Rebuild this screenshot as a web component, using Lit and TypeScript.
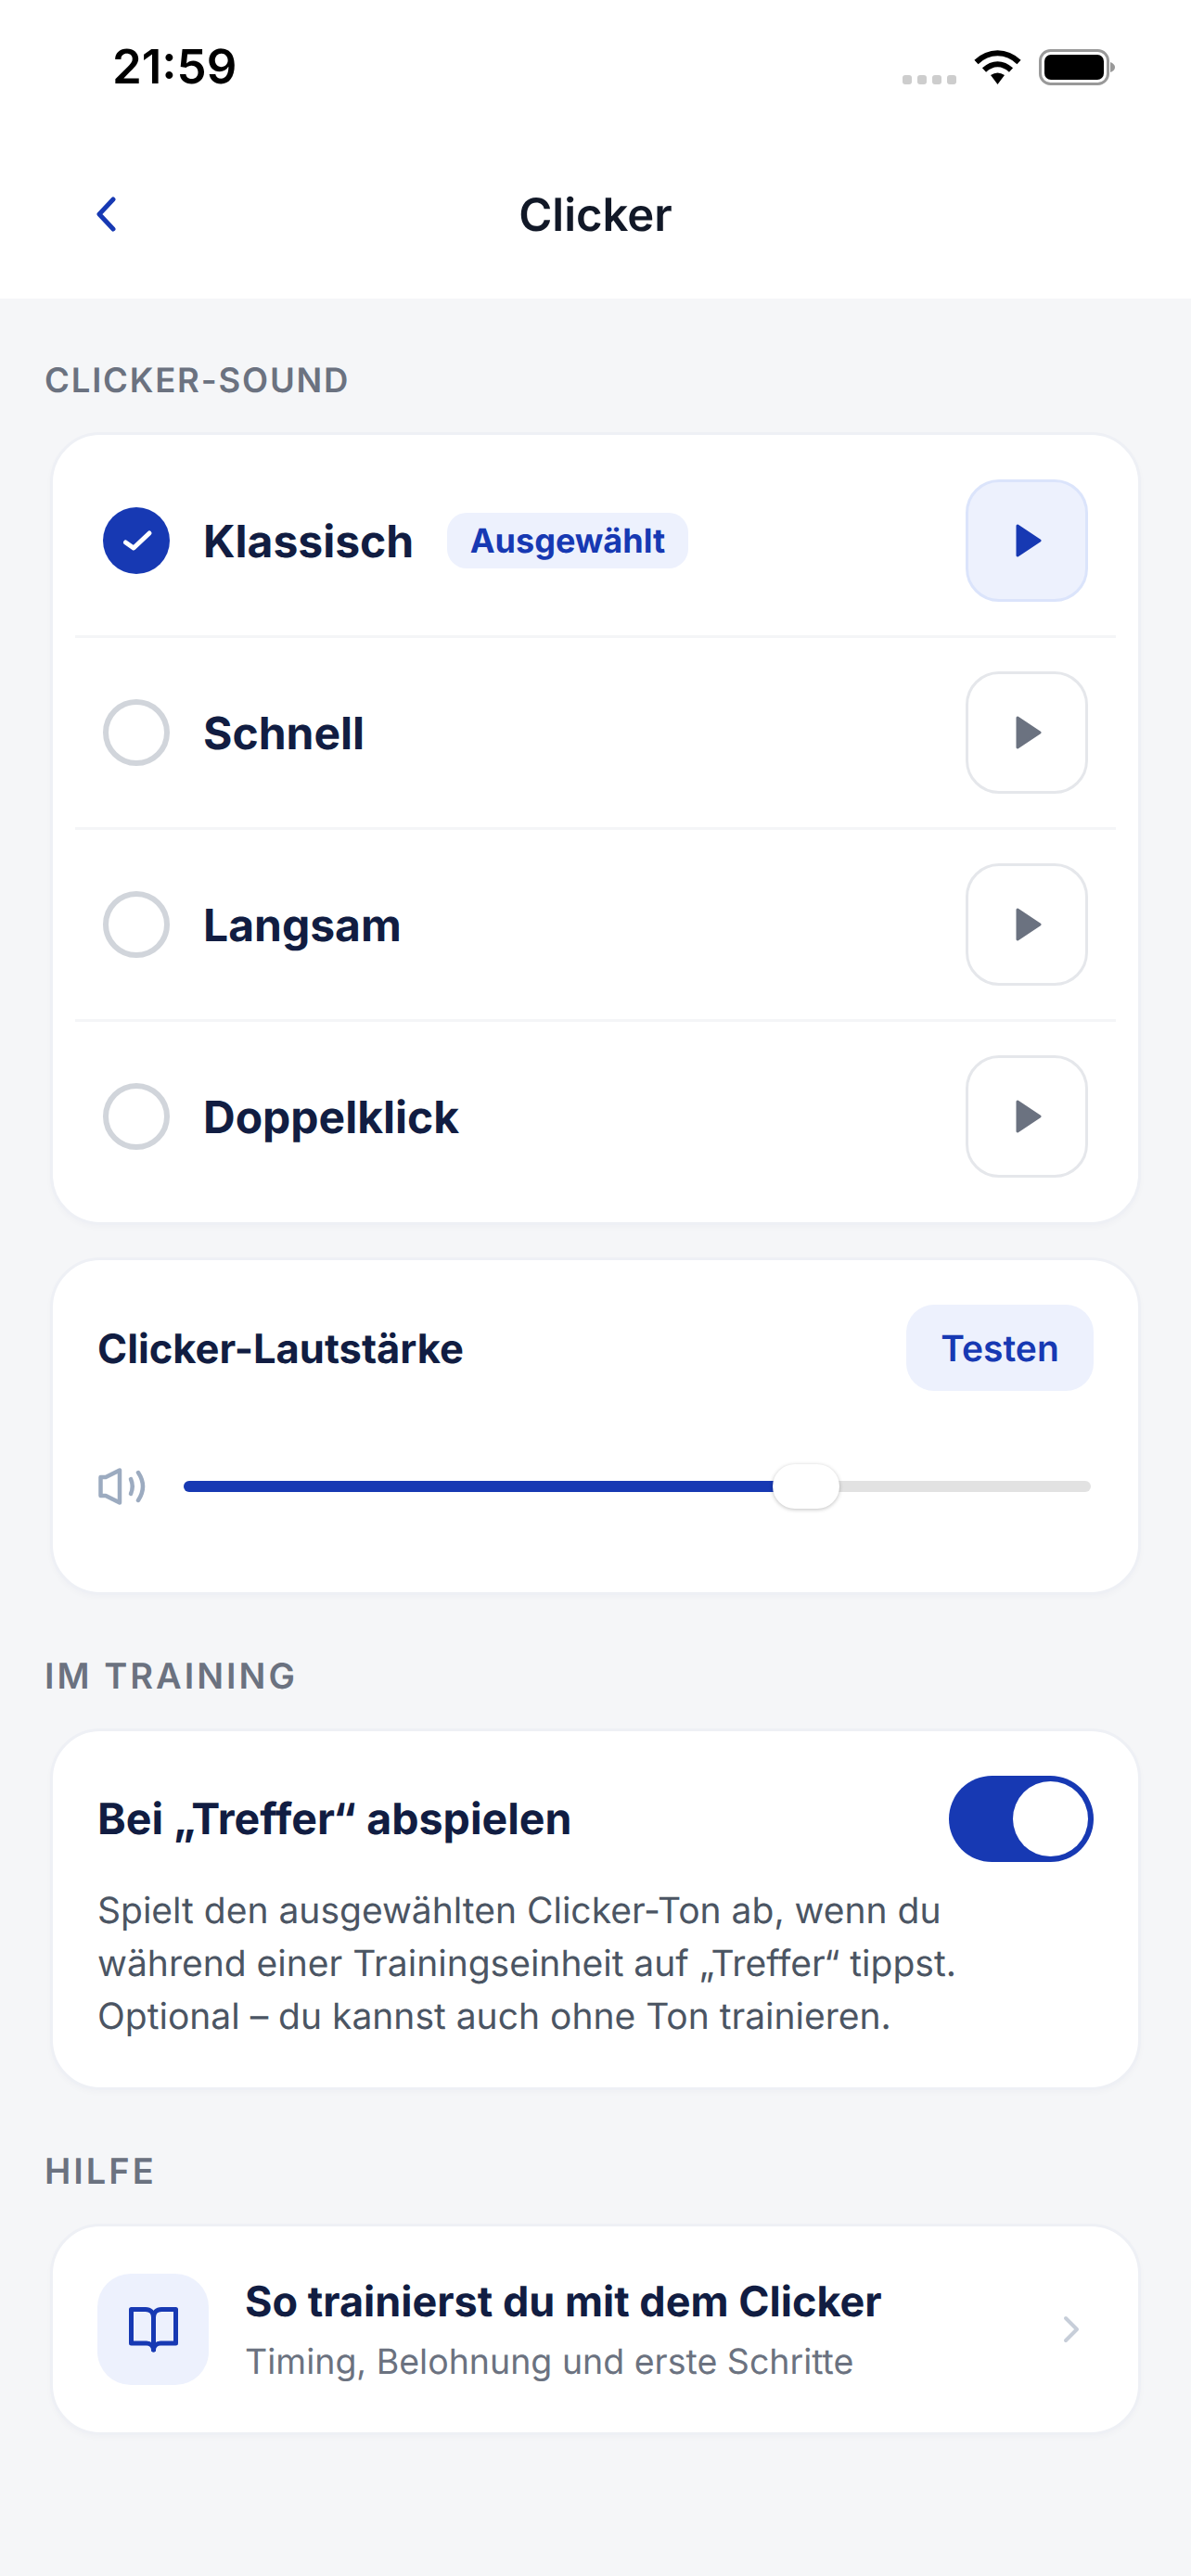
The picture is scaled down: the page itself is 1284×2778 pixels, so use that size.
import { LitElement, html, css } from 'lit';
import { customElement } from 'lit/decorators.js';

const SOUNDS = ['Klassisch', 'Schnell', 'Langsam', 'Doppelklick'];
const VOLUME = 68.6;

@customElement('app-root')
export class AppRoot extends LitElement {
    static styles = css`
        :host {
            display: block;
            width: 1284px;
            min-height: 2778px;
            background: #f5f6f8;
            font-family: Inter, "Liberation Sans", sans-serif;
            color: #111d42;
            text-rendering: geometricPrecision;
        }
        svg { display: block; }

        .top { background: #fff; height: 322px; }
        .status {
            height: 142px;
            box-sizing: border-box;
            padding: 49px 82px 0 121px;
            display: flex;
            justify-content: space-between;
            align-items: flex-start;
        }
        .time {
            font-size: 51px;
            font-weight: 600;
            line-height: 48px;
            color: #000;
        }
        .status-icons { display: flex; align-items: flex-start; padding-top: 4px; }
        .dots { display: flex; gap: 6px; margin: 28px 19px 0 0; }
        .dots i { width: 10px; height: 10px; border-radius: 3px; background: #cdcdcd; }
        .battery { margin-left: 19px; }

        .nav {
            height: 180px;
            box-sizing: border-box;
            padding-bottom: 2px;
            position: relative;
            display: flex;
            align-items: center;
            justify-content: center;
        }
        .back { position: absolute; left: 102px; top: 70px; color: #1739b3; }
        .nav h1 { margin: 0; font-size: 49px; font-weight: 600; color: #111827; }

        main { padding: 64px 54px 0; }
        .label {
            margin: 0 0 32px -6px;
            font-size: 38px;
            line-height: 48px;
            font-weight: 600;
            letter-spacing: 3px;
            color: #6b7280;
        }
        .label.first { font-size: 36.5px; letter-spacing: 1.8px; }
        .card {
            background: #fff;
            border: 3px solid #eef0f5;
            border-radius: 54px;
            box-shadow: 0 3px 6px rgba(17, 29, 66, 0.025);
        }

        .list { padding: 12px 24px; }
        .row {
            display: flex;
            align-items: center;
            padding: 36px 30px;
        }
        .row + .row { border-top: 3px solid #f4f5f7; }
        .radio {
            width: 72px;
            height: 72px;
            box-sizing: border-box;
            border: 6px solid #d1d5db;
            border-radius: 50%;
            margin-right: 36px;
            flex: none;
        }
        .radio.on { background: #1739b3; border: 0; color: #fff; }
        .name { font-size: 48px; font-weight: 700; color: #111d42; }
        .badge {
            margin-left: 36px;
            height: 60px;
            padding: 0 24.5px;
            display: flex;
            align-items: center;
            border-radius: 21px;
            background: #edf1fd;
            color: #1739b3;
            font-size: 36px;
            font-weight: 700;
        }
        .play {
            margin-left: auto;
            width: 132px;
            height: 132px;
            box-sizing: border-box;
            border: 3px solid #e5e7eb;
            border-radius: 36px;
            background: #fff;
            color: #6b7280;
            display: flex;
            align-items: center;
            justify-content: center;
            padding: 0 0 0 4px;
        }
        .play.on { background: #edf1fd; border-color: #dbe4fb; color: #1739b3; }

        .volume { margin-top: 35px; padding: 48px 48px 90px; }
        .volume-head { display: flex; align-items: center; justify-content: space-between; }
        .title { font-weight: 700; color: #111d42; }
        .volume-head .title { font-size: 43.5px; padding-top: 2px; }
        .training-head .title { font-size: 46.5px; }
        .test {
            width: 202px;
            height: 93px;
            box-sizing: border-box;
            padding-top: 2px;
            border-radius: 30px;
            background: #edf1fd;
            color: #1739b3;
            font-size: 39px;
            font-weight: 600;
            display: flex;
            align-items: center;
            justify-content: center;
        }
        .slider-row {
            margin-top: 79px;
            height: 48px;
            padding: 0 3px 0 1px;
            display: flex;
            align-items: center;
            gap: 40px;
        }
        .speaker { color: #9cabc0; flex: none; }
        .track {
            flex: 1;
            height: 12px;
            border-radius: 6px;
            background: #e2e2e2;
            position: relative;
        }
        .fill { height: 100%; border-radius: 6px 0 0 6px; background: #1739b3; }
        .thumb {
            position: absolute;
            top: -18px;
            width: 72px;
            height: 48px;
            margin-left: -36px;
            border-radius: 24px;
            background: #fff;
            box-shadow: 0 1px 4px rgba(0, 0, 0, 0.25);
        }

        .section { margin-top: 64px; }
        .training { padding: 48px 48px 48px; }
        .training-head { display: flex; align-items: center; justify-content: space-between; }
        .toggle {
            width: 156px;
            height: 93px;
            box-sizing: border-box;
            padding: 6px;
            border-radius: 47px;
            background: #1739b3;
            display: flex;
            justify-content: flex-end;
        }
        .toggle i { width: 81px; height: 81px; border-radius: 50%; background: #fff; }
        .desc {
            margin: 24px 0 0;
            font-size: 39px;
            line-height: 57px;
            color: #4b5563;
        }

        .help {
            display: flex;
            align-items: center;
            gap: 39px;
            padding: 51px 63px 51px 48px;
        }
        .help-icon {
            width: 120px;
            height: 120px;
            border-radius: 36px;
            background: #edf1fd;
            color: #1739b3;
            display: flex;
            align-items: center;
            justify-content: center;
            flex: none;
        }
        .help-text { flex: 1; }
        .help-title { font-size: 45px; line-height: 60px; font-weight: 700; color: #111d42; }
        .help-sub { margin-top: 9px; margin-bottom: -3px; font-size: 37.5px; line-height: 54px; color: #6b7280; }
        .chev { color: #c7ced9; }
    `;

    renderPlay() {
        return html`<svg width="28" height="36" viewBox="0 0 28 36">
            <path d="M2 2 L26 18 L2 34 Z" fill="currentColor" stroke="currentColor" stroke-width="3" stroke-linejoin="round"/>
        </svg>`;
    }

    renderRow(name: string, i: number) {
        const on = i === 0;
        return html`
            <div class="row">
                <div class="radio ${on ? 'on' : ''}">
                    ${on ? html`<svg width="72" height="72" viewBox="0 0 72 72">
                        <path d="M24.5 38 L33 44 L50 28" fill="none" stroke="currentColor" stroke-width="5" stroke-linecap="round" stroke-linejoin="round"/>
                    </svg>` : ''}
                </div>
                <span class="name">${name}</span>
                ${on ? html`<span class="badge">Ausgewählt</span>` : ''}
                <div class="play ${on ? 'on' : ''}">${this.renderPlay()}</div>
            </div>
        `;
    }

    render() {
        return html`
            <div class="top">
                <div class="status">
                    <span class="time">21:59</span>
                    <div class="status-icons">
                        <div class="dots"><i></i><i></i><i></i><i></i></div>
                        <svg width="51" height="38" viewBox="0 0 51 38">
                            <path d="M2.5 14 C16 1 35 1 48.5 14" fill="none" stroke="#000" stroke-width="6"/>
                            <path d="M11 22.5 C20 14 31 14 40 22.5" fill="none" stroke="#000" stroke-width="6"/>
                            <path d="M18 28 Q25.5 23 33 28 L25.5 38 Z" fill="#000"/>
                        </svg>
                        <svg class="battery" width="82" height="39" viewBox="0 0 82 39">
                            <rect x="1.5" y="1.5" width="73" height="36" rx="11" fill="none" stroke="#999" stroke-width="3"/>
                            <rect x="6" y="6" width="64" height="27" rx="7" fill="#000"/>
                            <path d="M77 14 Q82 16 82 19.5 Q82 23 77 25 Z" fill="#999"/>
                        </svg>
                    </div>
                </div>
                <div class="nav">
                    <svg class="back" width="24" height="38" viewBox="0 0 24 38">
                        <path d="M20 3 L5 19 L20 35" fill="none" stroke="currentColor" stroke-width="5" stroke-linecap="round" stroke-linejoin="round"/>
                    </svg>
                    <h1>Clicker</h1>
                </div>
            </div>

            <main>
                <p class="label first">CLICKER-SOUND</p>
                <div class="card list">
                    ${SOUNDS.map((s, i) => this.renderRow(s, i))}
                </div>

                <div class="card volume">
                    <div class="volume-head">
                        <span class="title">Clicker-Lautstärke</span>
                        <span class="test">Testen</span>
                    </div>
                    <div class="slider-row">
                        <svg class="speaker" width="52" height="40" viewBox="0 0 52 40" fill="none" stroke="currentColor" stroke-width="4.5" stroke-linecap="round" stroke-linejoin="round">
                            <path d="M2.5 10 H8 L23 2.5 V37.5 L8 30 H2.5 Z"/>
                            <path d="M35 12 Q38.5 20 35 28"/>
                            <path d="M43 5 Q53 20 43 35"/>
                        </svg>
                        <div class="track">
                            <div class="fill" style="width:${VOLUME}%"></div>
                            <div class="thumb" style="left:${VOLUME}%"></div>
                        </div>
                    </div>
                </div>

                <div class="section">
                    <p class="label">IM TRAINING</p>
                    <div class="card training">
                        <div class="training-head">
                            <span class="title">Bei „Treffer“ abspielen</span>
                            <div class="toggle"><i></i></div>
                        </div>
                        <p class="desc">Spielt den ausgewählten Clicker-Ton ab, wenn du<br>während einer Trainingseinheit auf „Treffer“ tippst.<br>Optional – du kannst auch ohne Ton trainieren.</p>
                    </div>
                </div>

                <div class="section">
                    <p class="label">HILFE</p>
                    <div class="card help">
                        <div class="help-icon">
                            <svg width="53" height="49" viewBox="0 0 53 49" fill="none" stroke="currentColor" stroke-width="5" stroke-linecap="round" stroke-linejoin="round">
                                <path d="M26.5 46 V11 C26.5 6 23 2.5 18 2.5 H2.5 V39 H19 C23 39 26.5 42 26.5 46"/>
                                <path d="M26.5 46 V11 C26.5 6 30 2.5 35 2.5 H50.5 V39 H34 C30 39 26.5 42 26.5 46"/>
                            </svg>
                        </div>
                        <div class="help-text">
                            <div class="help-title">So trainierst du mit dem Clicker</div>
                            <div class="help-sub">Timing, Belohnung und erste Schritte</div>
                        </div>
                        <svg class="chev" width="18" height="30" viewBox="0 0 18 30">
                            <path d="M3 3 L15 15 L3 27" fill="none" stroke="currentColor" stroke-width="4" stroke-linecap="round" stroke-linejoin="round"/>
                        </svg>
                    </div>
                </div>
            </main>
        `;
    }
}
